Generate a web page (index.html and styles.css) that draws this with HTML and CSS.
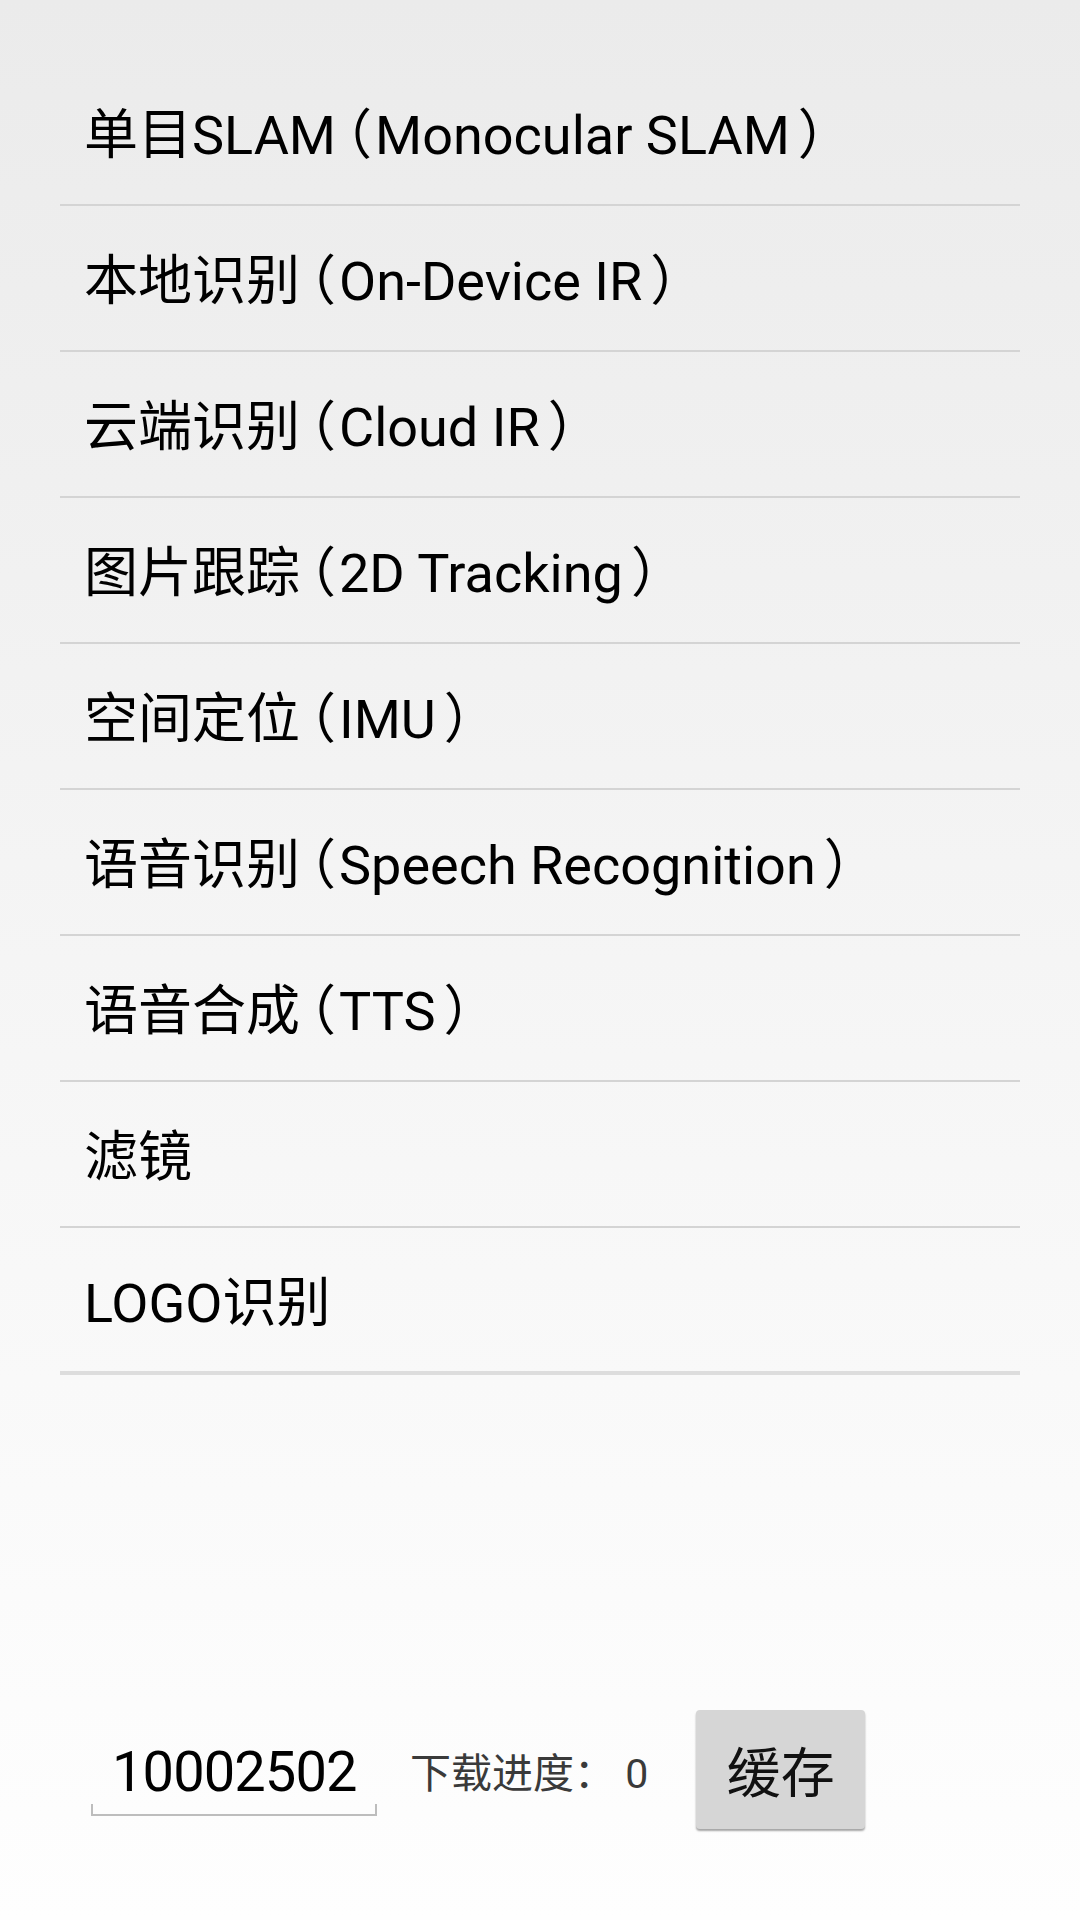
FILE: index.html
```html
<!DOCTYPE html>
<html lang="zh">
<head>
<meta charset="utf-8">
<link rel="stylesheet" href="styles.css">
</head>
<body>
<div class="page">
  <ul class="menu">
    <li class="item">单目SLAM<span class="lp">（</span>Monocular SLAM<span class="rp">）</span></li>
    <li class="item">本地识别<span class="lp">（</span>On-Device IR<span class="rp">）</span></li>
    <li class="item">云端识别<span class="lp">（</span>Cloud IR<span class="rp">）</span></li>
    <li class="item">图片跟踪<span class="lp">（</span>2D Tracking<span class="rp">）</span></li>
    <li class="item">空间定位<span class="lp">（</span>IMU<span class="rp">）</span></li>
    <li class="item">语音识别<span class="lp">（</span>Speech Recognition<span class="rp">）</span></li>
    <li class="item">语音合成<span class="lp">（</span>TTS<span class="rp">）</span></li>
    <li class="item">滤镜</li>
    <li class="item last">LOGO识别</li>
  </ul>
  <div class="bottom">
    <div class="edit">10002502</div>
    <div class="progress">下载进度： 0</div>
    <div class="btn">缓存</div>
  </div>
</div>
</body>
</html>
```
FILE: styles.css
```css
html, body {
  margin: 0;
  padding: 0;
}
body {
  width: 1080px;
  height: 1920px;
  background: linear-gradient(to bottom, #ebebeb 0%, #f6f6f6 55%, #fefefe 100%);
  font-family: Roboto, "Noto Sans CJK SC", sans-serif;
  color: #000;
}
.page {
  display: flex;
  flex-direction: column;
  height: 1920px;
}
.menu {
  list-style: none;
  margin: 60px 60px 0 60px;
  padding: 0;
}
.item {
  box-sizing: border-box;
  height: 146px;
  border-bottom: 2px solid #d4d4d4;
  display: flex;
  align-items: center;
  padding: 8px 0 0 24px;
  font-size: 54px;
  line-height: 1;
  white-space: pre;
}
.item.last {
  border-bottom: 4px solid #dddddd;
  height: 147px;
}
.lp {
  font-feature-settings: "halt" 1;
  padding: 0 3px 0 9px;
}
.rp {
  font-feature-settings: "halt" 1;
  padding-left: 8px;
}
.bottom {
  margin-top: auto;
  padding: 0 0 91px 91px;
  display: flex;
  align-items: center;
}
.edit {
  width: 286px;
  height: 86px;
  box-sizing: border-box;
  padding-left: 21px;
  font-size: 56px;
  letter-spacing: -0.9px;
  line-height: 84px;
  border-bottom: 2px solid #bdbdbd;
  background:
    linear-gradient(#bdbdbd, #bdbdbd) left bottom / 2px 10px no-repeat,
    linear-gradient(#bdbdbd, #bdbdbd) right bottom / 2px 10px no-repeat;
  margin-top: 6px;
  white-space: pre;
}
.progress {
  margin-left: 33px;
  font-size: 41px;
  color: #3a3a3a;
  white-space: pre;
}
.btn {
  margin-left: 48px;
  width: 169px;
  height: 119px;
  background: #d6d6d6;
  border-radius: 4px;
  box-shadow: 0 2px 2px rgba(0, 0, 0, 0.35);
  display: flex;
  align-items: center;
  justify-content: center;
  font-size: 54px;
  color: #111;
}
```
